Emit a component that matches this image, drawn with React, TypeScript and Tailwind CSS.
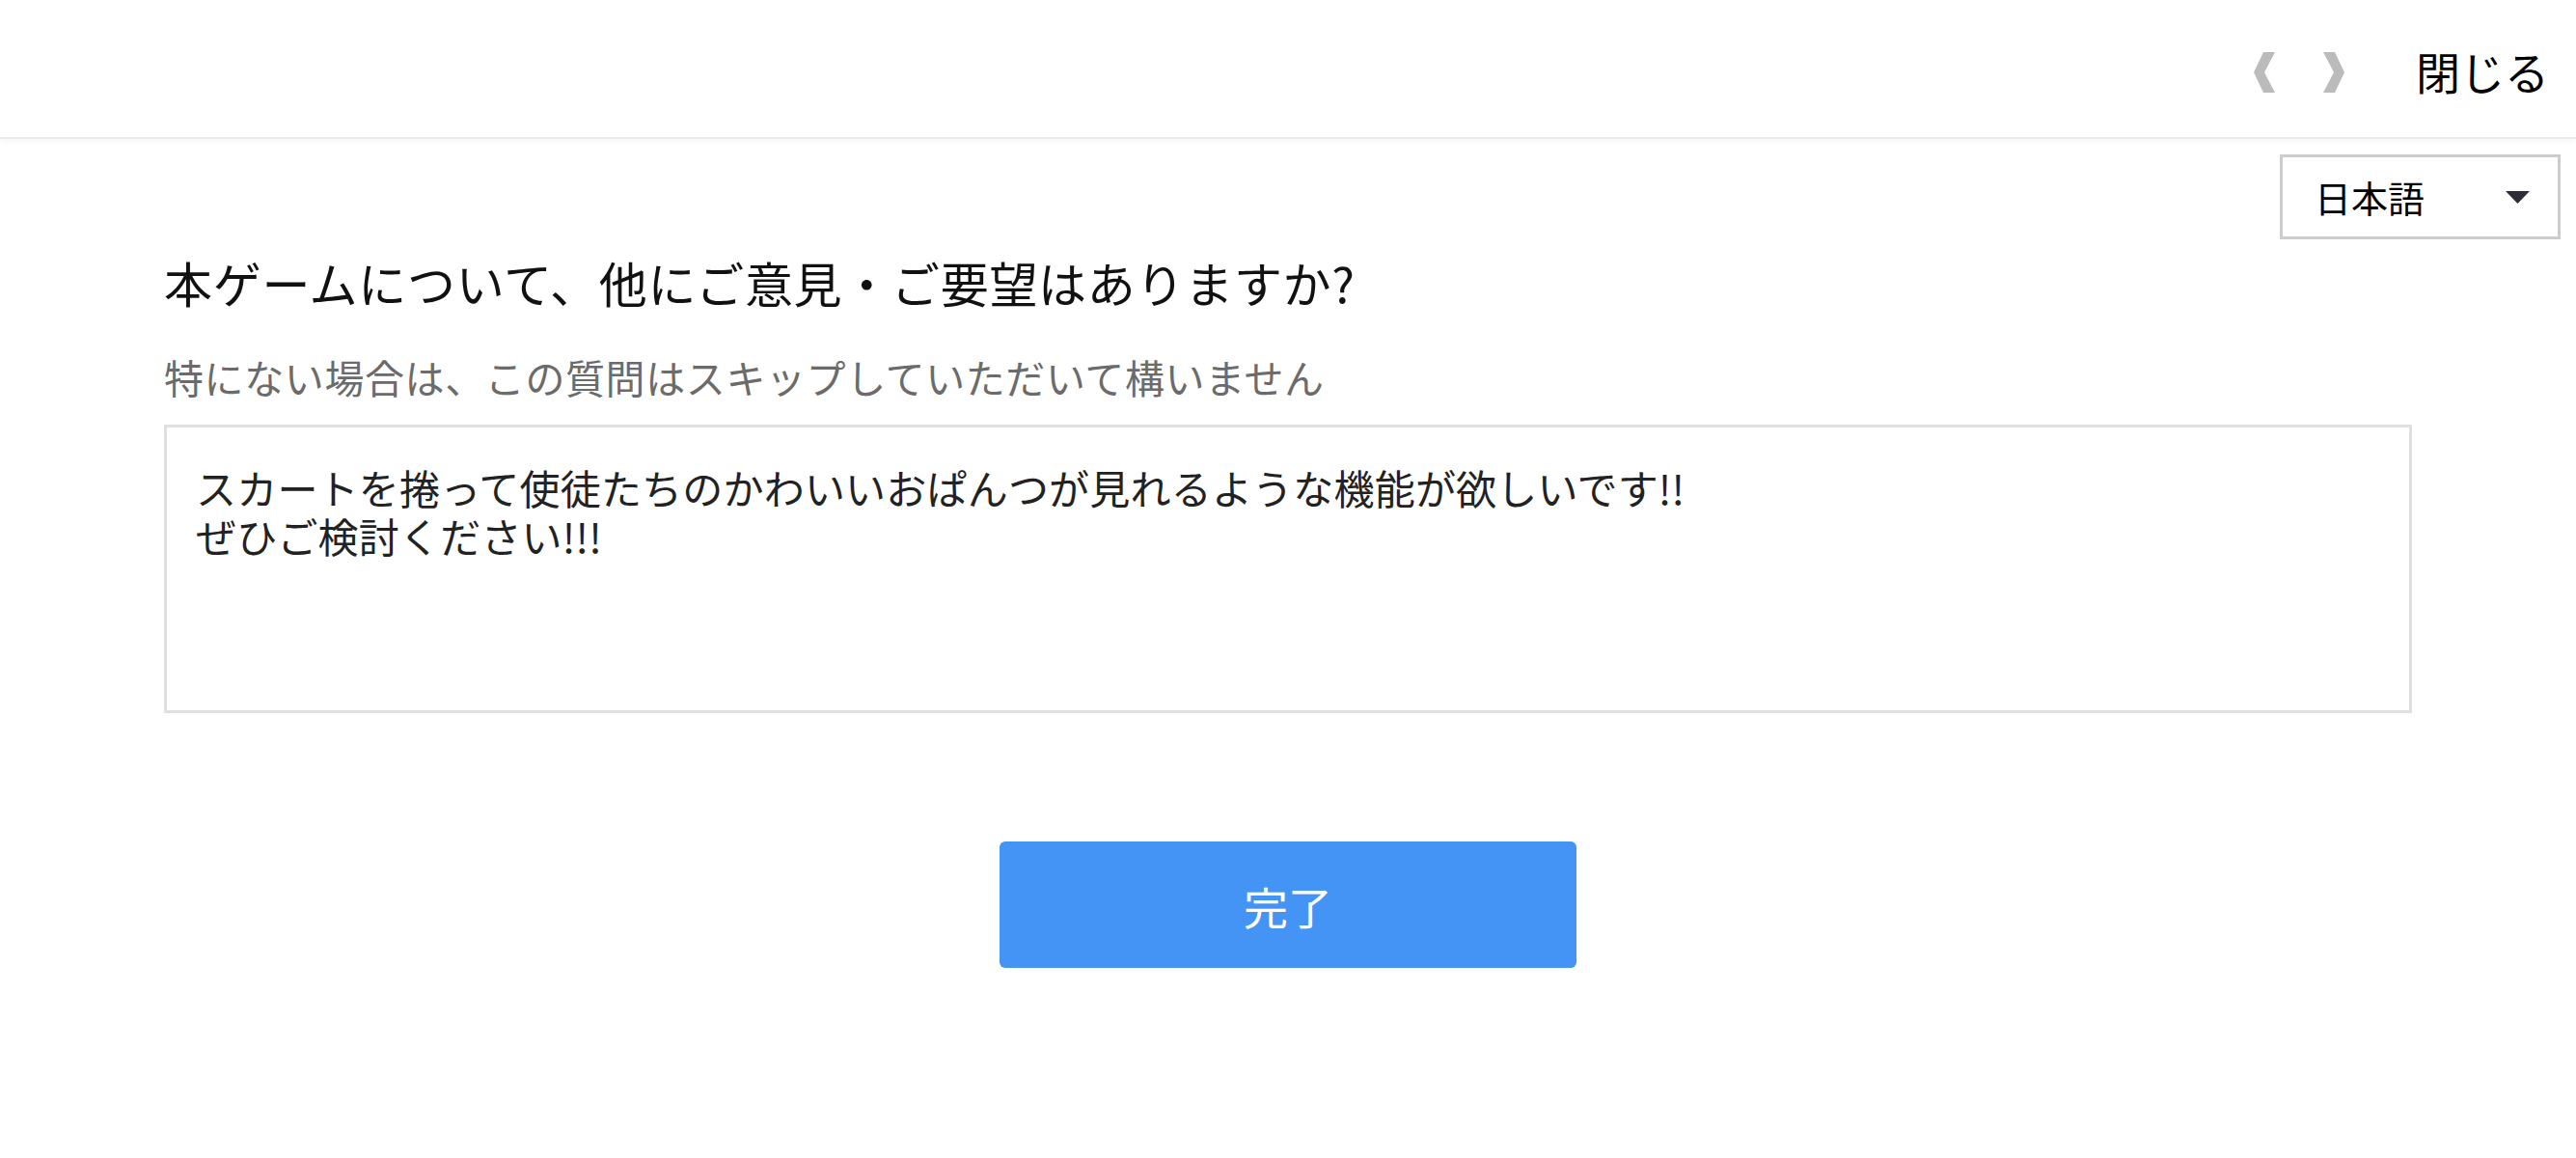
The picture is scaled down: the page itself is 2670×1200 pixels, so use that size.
import { useState } from 'react'

const FONT = { fontFamily: '"Noto Sans CJK JP", "Noto Sans", sans-serif' }

function Chevron({ dir }: { dir: 'left' | 'right' }) {
  const pts = dir === 'left'
    ? '10,0 22,0 11,21 22,42 10,42 0,21'
    : '0,0 12,0 22,21 12,42 0,42 11,21'
  return (
    <svg width="22" height="42" viewBox="0 0 22 42" className="block">
      <polygon points={pts} fill="#bbbbbb" />
    </svg>
  )
}

export default function App() {
  const [text, setText] = useState(
    'スカートを捲って使徒たちのかわいいおぱんつが見れるような機能が欲しいです!!\nぜひご検討ください!!!'
  )

  return (
    <div className="min-h-[1200px] w-full bg-white text-black" style={FONT}>
      {/* Header */}
      <div className="h-[144px] flex items-center justify-end pr-[28px] border-b-2 border-[#ebebeb] shadow-[0_3px_6px_rgba(0,0,0,0.04)]">
        <button className="mr-[50px] mt-[8px]">
          <Chevron dir="left" />
        </button>
        <button className="mr-[74px] mt-[8px]">
          <Chevron dir="right" />
        </button>
        <button className="text-[46px] leading-none text-black mt-[4px]">閉じる</button>
      </div>

      {/* Language select */}
      <div className="flex justify-end pr-[16px] mt-[16px]">
        <div className="w-[291px] h-[88px] border-[3px] border-[#cccccc] flex items-center justify-between pl-[33px] pr-[29px]">
          <span className="text-[38px] leading-none">日本語</span>
          <svg width="25" height="13" viewBox="0 0 25 13" className="block">
            <polygon points="0,0 25,0 12.5,13" fill="#2d2d3a" />
          </svg>
        </div>
      </div>

      {/* Content */}
      <div className="px-[170px]">
        <h1 className="mt-[14px] text-[50px] leading-[60px] tracking-[0.7px] font-normal text-[#111111]">
          本ゲームについて、他にご意見・ご要望はありますか?
        </h1>
        <p className="mt-[44px] text-[41px] leading-[49px] tracking-[0.6px] text-[#6b6b6b]">
          特にない場合は、この質問はスキップしていただいて構いません
        </p>
        <textarea
          value={text}
          onChange={e => setText(e.target.value)}
          className="mt-[25px] block w-full h-[299px] border-[3px] border-[#e0e0e0] px-[30px] pt-[37px] text-[42px] leading-[50px] tracking-[0.2px] text-[#222222] resize-none outline-none"
          style={FONT}
        />
        <div className="flex justify-center mt-[133px]">
          <button className="w-[598px] h-[131px] rounded-[6px] bg-[#4394f5] text-white text-[46px] leading-none">
            完了
          </button>
        </div>
      </div>
    </div>
  )
}
